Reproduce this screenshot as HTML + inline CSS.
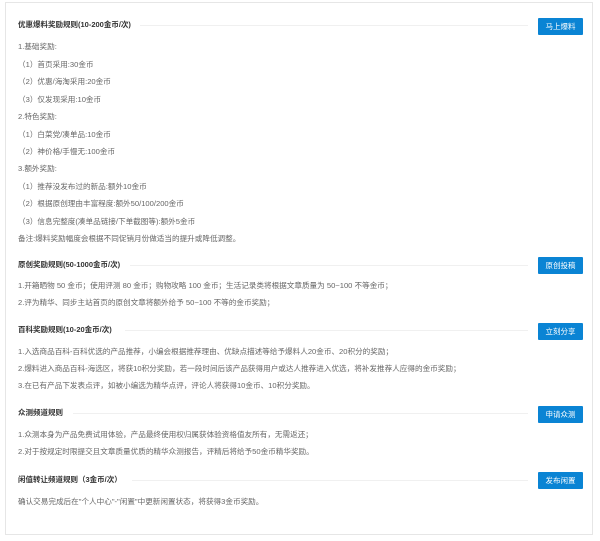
<!DOCTYPE html>
<html><head><meta charset="utf-8"><style>
body{margin:0;width:600px;height:541px;background:#fff;font-family:"Liberation Sans","Noto Sans CJK SC",sans-serif;position:relative;overflow:hidden}
.panel{position:absolute;left:5px;top:2px;width:588px;height:533px;border:1px solid #e6e6e6;box-sizing:border-box}
.t{position:absolute;left:18px;font-size:7.6px;line-height:10px;color:#666;white-space:nowrap;margin-top:1px}
.h{font-weight:bold;color:#333;font-size:7.5px;margin-top:0}
.ln{position:absolute;height:1px;background:#f0f0f0}
.b{position:absolute;left:538px;width:45px;height:17px;background:#0a84d4;color:#fff;font-size:7.5px;line-height:17px;text-align:center;border-radius:1px}
</style></head><body>
<div class="panel"></div>

<div class="t h" style="top:20px">优惠爆料奖励规则(10-200金币/次)</div>
<div class="ln" style="left:140px;width:388px;top:25px"></div>
<div class="b" style="top:18px">马上爆料</div>
<div class="t" style="top:41px">1.基础奖励:</div>
<div class="t" style="top:59px">（1）首页采用:30金币</div>
<div class="t" style="top:76px">（2）优惠/海淘采用:20金币</div>
<div class="t" style="top:94px">（3）仅发现采用:10金币</div>
<div class="t" style="top:111px">2.特色奖励:</div>
<div class="t" style="top:129px">（1）白菜党/凑单品:10金币</div>
<div class="t" style="top:146px">（2）神价格/手慢无:100金币</div>
<div class="t" style="top:163px">3.额外奖励:</div>
<div class="t" style="top:181px">（1）推荐没发布过的新品:额外10金币</div>
<div class="t" style="top:198px">（2）根据原创理由丰富程度:额外50/100/200金币</div>
<div class="t" style="top:216px">（3）信息完整度(凑单品链接/下单截图等):额外5金币</div>
<div class="t" style="top:233px">备注:爆料奖励幅度会根据不同促销月份做适当的提升或降低调整。</div>

<div class="t h" style="top:260px">原创奖励规则(50-1000金币/次)</div>
<div class="ln" style="left:130px;width:398px;top:265px"></div>
<div class="b" style="top:257px">原创投稿</div>
<div class="t" style="top:280px">1.开箱晒物 50 金币；使用评测 80 金币；购物攻略 100 金币；生活记录类将根据文章质量为 50~100 不等金币；</div>
<div class="t" style="top:297px">2.评为精华、同步主站首页的原创文章将额外给予 50~100 不等的金币奖励；</div>

<div class="t h" style="top:325px">百科奖励规则(10-20金币/次)</div>
<div class="ln" style="left:125px;width:403px;top:330px"></div>
<div class="b" style="top:323px">立刻分享</div>
<div class="t" style="top:346px">1.入选商品百科-百科优选的产品推荐，小编会根据推荐理由、优缺点描述等给予爆料人20金币、20积分的奖励；</div>
<div class="t" style="top:363px">2.爆料进入商品百科-海选区，将获10积分奖励，若一段时间后该产品获得用户或达人推荐进入优选，将补发推荐人应得的金币奖励；</div>
<div class="t" style="top:380px">3.在已有产品下发表点评，如被小编选为精华点评，评论人将获得10金币、10积分奖励。</div>

<div class="t h" style="top:408px">众测频道规则</div>
<div class="ln" style="left:73px;width:455px;top:413px"></div>
<div class="b" style="top:406px">申请众测</div>
<div class="t" style="top:429px">1.众测本身为产品免费试用体验，产品最终使用权归属获体验资格值友所有，无需返还；</div>
<div class="t" style="top:446px">2.对于按规定时限提交且文章质量优质的精华众测报告，评精后将给予50金币精华奖励。</div>

<div class="t h" style="top:475px">闲值转让频道规则（3金币/次）</div>
<div class="ln" style="left:132px;width:396px;top:480px"></div>
<div class="b" style="top:472px">发布闲置</div>
<div class="t" style="top:496px">确认交易完成后在"个人中心"-"闲置"中更新闲置状态，将获得3金币奖励。</div>
</body></html>
